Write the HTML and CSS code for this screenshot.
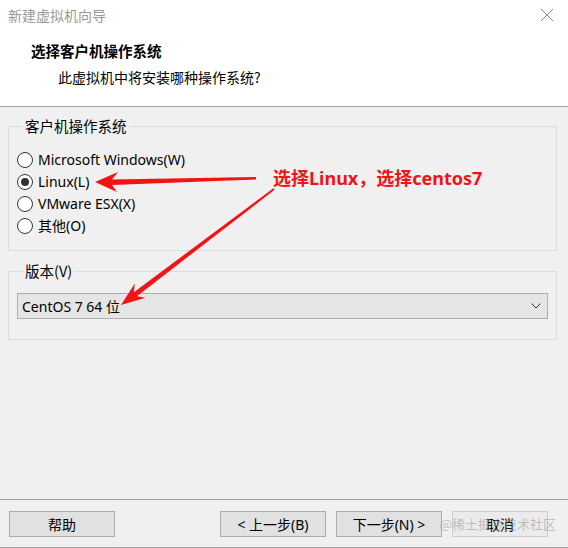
FILE: index.html
```html
<!DOCTYPE html>
<html lang="zh-CN">
<head>
<meta charset="utf-8">
<title>新建虚拟机向导</title>
<link rel="stylesheet" href="styles.css">
</head>
<body>
<div class="window">
  <header class="header">
    <div class="titlebar">
      <span class="title">新建虚拟机向导</span>
      <svg class="close" width="14" height="14" viewBox="0 0 14 14"><path d="M1 1 L13 13 M13 1 L1 13" stroke="#8a8a8a" stroke-width="1" fill="none"/></svg>
    </div>
    <div class="heading">选择客户机操作系统</div>
    <div class="subheading">此虚拟机中将安装哪种操作系统?</div>
  </header>

  <main class="main">
    <fieldset class="group group-os">
      <legend class="legend">客户机操作系统</legend>
      <div class="radio-row"><span class="radio"></span><span class="label">Microsoft Windows(W)</span></div>
      <div class="radio-row"><span class="radio checked"></span><span class="label">Linux(L)</span></div>
      <div class="radio-row"><span class="radio"></span><span class="label">VMware ESX(X)</span></div>
      <div class="radio-row"><span class="radio"></span><span class="label">其他(O)</span></div>
    </fieldset>

    <fieldset class="group group-ver">
      <legend class="legend">版本(V)</legend>
      <div class="select">
        <span class="select-text">CentOS 7 64 位</span>
        <svg class="chevron" width="10" height="6" viewBox="0 0 10 6"><path d="M0.5 0.5 L5 5 L9.5 0.5" stroke="#333" stroke-width="1" fill="none"/></svg>
      </div>
    </fieldset>
  </main>

  <footer class="footer">
    <button class="btn btn-help">帮助</button>
    <div class="btn-group">
      <button class="btn">&lt; 上一步(B)</button>
      <button class="btn">下一步(N) &gt;</button>
      <button class="btn btn-cancel">取消</button>
    </div>
    <span class="watermark">@稀土掘金技术社区</span>
  </footer>

  <div class="note">选择Linux，选择centos7</div>
  <svg class="arrows" width="568" height="548" viewBox="0 0 568 548">
    <polygon fill="#f01414" points="95,182 118,172 112,179.5 256,177 256,179.5 112,185 117,192"/>
    <polygon fill="#f01414" points="121,305 134.8,283.4 133.9,292.2 273.4,188.2 274.6,189.8 136.9,296.2 145.6,297.8"/>
  </svg>
</div>
</body>
</html>
```

FILE: styles.css
```css
* { box-sizing: border-box; }
html, body {
  margin: 0;
  padding: 0;
  background: #f0f0f0;
}
body {
  font-family: "Noto Sans", "Noto Sans CJK SC", sans-serif;
  font-size: 14px;
  color: #000;
}
.window {
  position: relative;
  width: 568px;
  height: 548px;
  display: flex;
  flex-direction: column;
  overflow: hidden;
}
.header {
  background: #fff;
  height: 107px;
  border-bottom: 1px solid #a0a0a0;
  flex: none;
}
.titlebar {
  display: flex;
  justify-content: space-between;
  align-items: center;
  height: 32px;
  padding: 0 14px 2px 8px;
}
.title {
  color: #999;
  font-size: 14px;
  font-family: "Noto Sans CJK SC", sans-serif;
}
.close { display: block; }
.heading {
  margin: 9px 0 0 31px;
  font-family: "Noto Sans CJK SC", sans-serif;
  font-weight: bold;
  font-size: 14.5px;
  line-height: 20px;
}
.subheading {
  margin: 6px 0 0 58px;
  font-family: "Noto Sans CJK SC", sans-serif;
  font-size: 14px;
  line-height: 20px;
}
.main {
  flex: 1;
  padding: 10px 11px 0 8px;
}
.group {
  margin: 0;
  border: 1px solid #dcdcdc;
  min-width: 0;
}
.legend {
  padding: 0 2px;
  margin-left: 6px;
  font-family: "Noto Sans CJK SC", sans-serif;
  font-size: 14.5px;
  line-height: 18px;
  color: #000;
}
.group-os {
  padding: 14px 8px 11px 8px;
  height: 134px;
}
.radio-row {
  display: flex;
  align-items: center;
  height: 22px;
}
.radio {
  width: 16px;
  height: 16px;
  border: 1px solid #333;
  border-radius: 50%;
  background: #fff;
  margin-right: 5px;
  display: flex;
  align-items: center;
  justify-content: center;
  flex: none;
}
.radio.checked::after {
  content: "";
  width: 8px;
  height: 8px;
  border-radius: 50%;
  background: #333;
}
.label {
  font-size: 14px;
  line-height: 20px;
}
.group-ver {
  margin-top: 11px;
  padding: 13px 8px 20px 8px;
  height: 78px;
}
.select {
  height: 26px;
  border: 1px solid #adadad;
  background: #e5e5e5;
  display: flex;
  align-items: center;
  justify-content: space-between;
  padding: 0 6px 0 4px;
}
.select-text {
  font-size: 14px;
}
.chevron { display: block; }
.footer {
  position: relative;
  flex: none;
  height: 49px;
  border-top: 1px solid #a0a0a0;
  border-bottom: 1px solid #a0a0a0;
  display: flex;
  justify-content: space-between;
  align-items: center;
  padding: 0 20px 0 9px;
}
.btn-group {
  display: flex;
  gap: 10px;
}
.btn {
  width: 106px;
  height: 26px;
  margin-top: 1px;
  background: #e1e1e1;
  border: 1px solid #adadad;
  font-family: "Noto Sans", "Noto Sans CJK SC", sans-serif;
  font-size: 14px;
  color: #000;
  padding: 0;
}
.btn-cancel {
  width: 96px;
  background: #ebebeb;
  border-color: #cdcdcd;
}
.watermark {
  position: absolute;
  right: 12px;
  top: 14px;
  font-family: "Noto Sans CJK SC", sans-serif;
  font-size: 13px;
  color: rgba(150, 150, 150, 0.55);
  pointer-events: none;
}
.note {
  position: absolute;
  left: 273px;
  top: 167px;
  color: #f01414;
  font-family: "Noto Sans", "Noto Sans CJK SC", sans-serif;
  font-weight: bold;
  font-size: 18px;
  line-height: 23px;
}
.arrows {
  position: absolute;
  left: 0;
  top: 0;
  pointer-events: none;
}
```
